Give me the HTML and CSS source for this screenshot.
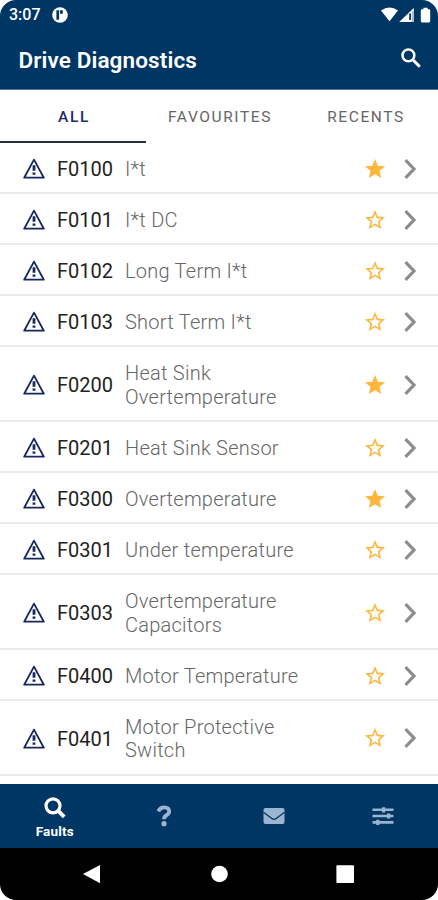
FILE: index.html
```html
<!DOCTYPE html>
<html lang="en">
<head>
<meta charset="utf-8">
<title>Drive Diagnostics</title>
<link rel="stylesheet" href="styles.css">
</head>
<body>
<svg class="defs" aria-hidden="true">
  <symbol id="warn" viewBox="0 0 22 21"><path d="M11 1.6 20.8 19.7H1.2Z" fill="none" stroke="currentColor" stroke-width="1.8" stroke-linejoin="round"/><path d="M9.6 7.2h2.8v5.6H9.6zM9.6 14.6h2.8v2.2H9.6z" fill="currentColor"/></symbol>
  <symbol id="star" viewBox="0 0 24 24"><path d="M12 17.27 18.18 21l-1.64-7.03L22 9.24l-7.19-.61L12 2 9.19 8.63 2 9.24l5.46 4.73L5.82 21z"/></symbol>
  <symbol id="star-o" viewBox="0 0 24 24"><path d="m22 9.24-7.19-.62L12 2 9.19 8.63 2 9.24l5.46 4.73L5.82 21 12 17.27 18.18 21l-1.63-7.03L22 9.24zM12 15.4l-3.76 2.27 1-4.28-3.32-2.88 4.38-.38L12 6.1l1.71 4.04 4.38.38-3.32 2.88 1 4.28L12 15.4z"/></symbol>
  <symbol id="chev" viewBox="0 0 12 20"><path d="M1.5 1.2 10 10l-8.5 8.8" fill="none" stroke="currentColor" stroke-width="3.2"/></symbol>
</svg>
<div class="phone">
  <header class="top">
    <div class="status">
      <span class="clock">3:07</span>
      <svg class="badge" viewBox="0 0 16 16"><circle cx="8" cy="8" r="7.8" fill="#fff"/><path d="M4.4 3.2h2.7v9.6H4.4zM8 3.2h2.8v3.6H8z" fill="#003663"/></svg>
      <svg class="signals" viewBox="0 0 50 16"><path d="M0 3.4Q8.5-2.4 17 3.4L8.5 14.2Z" fill="#fff"/><path d="M18.2 15 32.8 1v14Z" fill="#fff"/><path d="M28.2 6.5h1.8V13h-1.8z" fill="#003663"/><path d="M30.8 4h2v11h-2z" fill="#a9b7c9"/><path d="M39.8 3.6q0-1.4 1.4-1.4h1.2V.8h4.2v1.4h1.2q1.4 0 1.4 1.4V14q0 1.4-1.4 1.4h-6.6q-1.4 0-1.4-1.4Z" fill="#fff"/></svg>
    </div>
    <div class="bar">
      <h1>Drive Diagnostics</h1>
      <svg class="search" viewBox="0 0 20 20"><circle cx="7.4" cy="7.4" r="5.9" fill="none" stroke="#fff" stroke-width="2.5"/><path d="m11.8 11.8 7 7" stroke="#fff" stroke-width="3"/></svg>
    </div>
  </header>
  <nav class="tabs"><div class="tab on">ALL</div><div class="tab">FAVOURITES</div><div class="tab">RECENTS</div></nav>
  <main class="list">
    <div class="row"><svg class="warn"><use href="#warn"/></svg><span class="code">F0100</span><span class="name">I*t</span><svg class="star"><use href="#star"/></svg><svg class="chev"><use href="#chev"/></svg></div>
    <div class="row"><svg class="warn"><use href="#warn"/></svg><span class="code">F0101</span><span class="name">I*t DC</span><svg class="star"><use href="#star-o"/></svg><svg class="chev"><use href="#chev"/></svg></div>
    <div class="row"><svg class="warn"><use href="#warn"/></svg><span class="code">F0102</span><span class="name">Long Term I*t</span><svg class="star"><use href="#star-o"/></svg><svg class="chev"><use href="#chev"/></svg></div>
    <div class="row"><svg class="warn"><use href="#warn"/></svg><span class="code">F0103</span><span class="name">Short Term I*t</span><svg class="star"><use href="#star-o"/></svg><svg class="chev"><use href="#chev"/></svg></div>
    <div class="row tall"><svg class="warn"><use href="#warn"/></svg><span class="code">F0200</span><span class="name">Heat Sink<br>Overtemperature</span><svg class="star"><use href="#star"/></svg><svg class="chev"><use href="#chev"/></svg></div>
    <div class="row"><svg class="warn"><use href="#warn"/></svg><span class="code">F0201</span><span class="name">Heat Sink Sensor</span><svg class="star"><use href="#star-o"/></svg><svg class="chev"><use href="#chev"/></svg></div>
    <div class="row"><svg class="warn"><use href="#warn"/></svg><span class="code">F0300</span><span class="name">Overtemperature</span><svg class="star"><use href="#star"/></svg><svg class="chev"><use href="#chev"/></svg></div>
    <div class="row"><svg class="warn"><use href="#warn"/></svg><span class="code">F0301</span><span class="name">Under temperature</span><svg class="star"><use href="#star-o"/></svg><svg class="chev"><use href="#chev"/></svg></div>
    <div class="row tall"><svg class="warn"><use href="#warn"/></svg><span class="code">F0303</span><span class="name">Overtemperature<br>Capacitors</span><svg class="star"><use href="#star-o"/></svg><svg class="chev"><use href="#chev"/></svg></div>
    <div class="row"><svg class="warn"><use href="#warn"/></svg><span class="code">F0400</span><span class="name">Motor Temperature</span><svg class="star"><use href="#star-o"/></svg><svg class="chev"><use href="#chev"/></svg></div>
    <div class="row tall"><svg class="warn"><use href="#warn"/></svg><span class="code">F0401</span><span class="name">Motor Protective<br>Switch</span><svg class="star"><use href="#star-o"/></svg><svg class="chev"><use href="#chev"/></svg></div>
  </main>
  <nav class="bottom">
    <div class="item on"><svg width="22" height="22" viewBox="0 0 22 22"><circle cx="9" cy="8.8" r="7" fill="none" stroke="#fff" stroke-width="3.2"/><path d="m14 13.7 6.2 6.2" stroke="#fff" stroke-width="4"/></svg><span>Faults</span></div>
    <div class="item"><svg width="16" height="22" viewBox="0 0 16 22"><path d="M2.3 6.4Q4.2 2.4 8 2.4q5.2 0 5.2 4.2 0 2.2-2.7 3.6-2.5 1.3-2.5 4" fill="none" stroke="currentColor" stroke-width="3.8"/><circle cx="8" cy="18.7" r="2.6" fill="currentColor"/></svg></div>
    <div class="item"><svg width="22" height="16" viewBox="0 0 22 16"><rect x=".5" width="21" height="16" rx="2" fill="currentColor"/><path d="m.5 4.2 8.3 6.3q2.2 1.7 4.4 0l8.3-6.3" fill="none" stroke="#003663" stroke-width="1.3"/></svg></div>
    <div class="item"><svg width="22" height="20" viewBox="0 0 22 20"><path d="M.5 3.8h21M.5 10h21M.5 16.4h21" stroke="currentColor" stroke-width="2.6"/><path d="M10 1.2h3.2v5.2H10zM15 7.4h3.2v5.2H15zM4.2 13.8h3.2V19H4.2z" fill="currentColor"/></svg></div>
  </nav>
  <footer class="system">
    <svg viewBox="0 0 438 52"><path d="M83 26 100 17v18.2Z" fill="#fff"/><circle cx="219.5" cy="26" r="8.3" fill="#fff"/><rect x="336.4" y="17.3" width="17.6" height="17.6" rx="1" fill="#fff"/></svg>
  </footer>
</div>
</body>
</html>
```

FILE: styles.css
```css
* { box-sizing: border-box; }
body { margin: 0; background: #fff; font-family: Roboto, sans-serif; }
.defs { position: absolute; width: 0; height: 0; }
svg { display: block; flex: none; }
.phone { width: 438px; height: 900px; border-radius: 16px; overflow: hidden; background: #fff; display: flex; flex-direction: column; }
.top { height: 90px; background: #003663; color: #fff; border-bottom: 1px solid #5b6f95; }
.status { height: 29px; display: flex; align-items: center; padding: 0 8px 0 9px; }
.clock { width: 43px; font-size: 16px; font-weight: 500; line-height: 29px; }
.badge { width: 16px; height: 16px; }
.signals { width: 50px; height: 16px; margin-left: auto; margin-right: -1px; }
.bar { height: 61px; display: flex; align-items: center; justify-content: space-between; padding: 0 17px 0 18.5px; }
h1 { margin: 0; font-size: 22.5px; line-height: 30px; font-weight: 600; letter-spacing: .12px; }
.search { width: 20px; height: 20px; margin-top: -4px; }
.tabs { height: 53px; display: flex; }
.tab { flex: 1; text-align: center; font-size: 15.5px; line-height: 55px; letter-spacing: 1.6px; color: #666; padding-left: 2px; }
.tab.on { color: #1c2c68; font-weight: 500; border-bottom: 2px solid #252b42; }
.list { flex: 1; }
.row { height: 51.1px; display: flex; align-items: center; padding: 2px 22.5px 0 23px; border-bottom: 2px solid #ebebeb; font-size: 20px; }
.row.tall { height: 74.7px; }
.warn { width: 22px; height: 21px; color: #17285f; }
.code { width: 68px; margin-left: 12px; padding-top: 1px; color: #222; }
.name { flex: 1; color: #666; font-weight: 300; line-height: 23.5px; letter-spacing: .25px; padding-top: 2px; }
.star { width: 24px; height: 24px; fill: #fdb73d; margin-right: 17px; }
.chev { width: 12px; height: 20px; color: #8b8d91; }
.bottom { height: 64px; background: #003663; display: grid; grid-template-columns: repeat(4, 1fr); color: #9bb4cf; }
.item { display: flex; flex-direction: column; align-items: center; justify-content: center; }
.item.on { color: #fff; font-size: 13.5px; font-weight: 700; letter-spacing: .2px; line-height: 17px; gap: 4px; padding-top: 4px; }
.system { height: 52px; background: #000; }
```
